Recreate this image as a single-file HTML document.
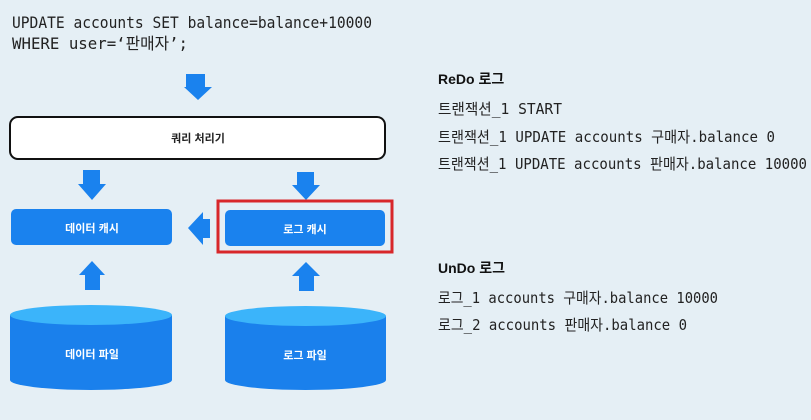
<!DOCTYPE html>
<html><head><meta charset="utf-8"><style>
html,body{margin:0;padding:0;background:#e5eff5;}
svg{display:block}
.m{font-family:"DejaVu Sans Mono","Liberation Mono","Noto Sans CJK KR",monospace;fill:#222;}
.b{font-family:"Liberation Sans","Noto Sans CJK KR",sans-serif;font-weight:bold;}
</style></head><body>
<svg width="811" height="420" viewBox="0 0 811 420" xmlns="http://www.w3.org/2000/svg">
<rect width="811" height="420" fill="#e5eff5"/>
<text class="m" x="12" y="28" font-size="16" textLength="360" lengthAdjust="spacingAndGlyphs">UPDATE accounts SET balance=balance+10000</text>
<text class="m" x="12" y="49" font-size="16" textLength="176" lengthAdjust="spacingAndGlyphs">WHERE user=‘판매자’;</text>

<g fill="#1a82ee">
<!-- top down arrow -->
<polygon points="186,74 205,74 205,87 212,87 198,100 184,87 186,87"/>
<!-- down arrows -->
<polygon points="83,170 100,170 100,184 106,184 92,200 78,184 83,184"/>
<polygon points="297,172 314,172 314,185 320,185 306,200 292,185 297,185"/>
<!-- left arrow -->
<polygon points="210,219 203,219 203,212 188,228 203,245 203,238 210,238"/>
<!-- up arrows -->
<polygon points="85,290 100,290 100,275 105,275 92,261 79,275 85,275"/>
<polygon points="299,291 314,291 314,276 320,276 306,262 292,276 299,276"/>
<rect x="11" y="209" width="161" height="36" rx="5"/>
<rect x="225" y="210" width="160" height="36" rx="5"/>
</g>
<rect x="218" y="201" width="174" height="51" fill="none" stroke="#d8272a" stroke-width="3"/>
<rect x="10" y="117" width="375" height="42" rx="8" fill="#fff" stroke="#111" stroke-width="2"/>
<text class="b" x="198" y="142" font-size="11" fill="#222" text-anchor="middle">쿼리 처리기</text>
<text class="b" x="92" y="232" font-size="11" fill="#fff" text-anchor="middle">데이터 캐시</text>
<text class="b" x="305" y="233" font-size="11" fill="#fff" text-anchor="middle">로그 캐시</text>

<!-- cylinders -->
<g>
<path d="M10,315 L10,380 A81,10 0 0 0 172,380 L172,315 Z" fill="#1a80ec"/>
<ellipse cx="91" cy="315" rx="81" ry="10" fill="#3bb4fa"/>
<path d="M225,316 L225,380 A80.5,10 0 0 0 386,380 L386,316 Z" fill="#1a80ec"/>
<ellipse cx="305.5" cy="316" rx="80.5" ry="10" fill="#3bb4fa"/>
</g>
<text class="b" x="92" y="358" font-size="11" fill="#fff" text-anchor="middle">데이터 파일</text>
<text class="b" x="305" y="359" font-size="11" fill="#fff" text-anchor="middle">로그 파일</text>

<text class="b" x="438" y="84" font-size="14" fill="#111">ReDo 로그</text>
<text class="m" x="438" y="114" font-size="15" textLength="124" lengthAdjust="spacingAndGlyphs">트랜잭션_1 START</text>
<text class="m" x="438" y="142" font-size="15" textLength="337" lengthAdjust="spacingAndGlyphs">트랜잭션_1 UPDATE accounts 구매자.balance 0</text>
<text class="m" x="438" y="169" font-size="15" textLength="369" lengthAdjust="spacingAndGlyphs">트랜잭션_1 UPDATE accounts 판매자.balance 10000</text>
<text class="b" x="438" y="273" font-size="14" fill="#111">UnDo 로그</text>
<text class="m" x="438" y="303" font-size="15" textLength="280" lengthAdjust="spacingAndGlyphs">로그_1 accounts 구매자.balance 10000</text>
<text class="m" x="438" y="330" font-size="15" textLength="249" lengthAdjust="spacingAndGlyphs">로그_2 accounts 판매자.balance 0</text>
</svg>
</body></html>
